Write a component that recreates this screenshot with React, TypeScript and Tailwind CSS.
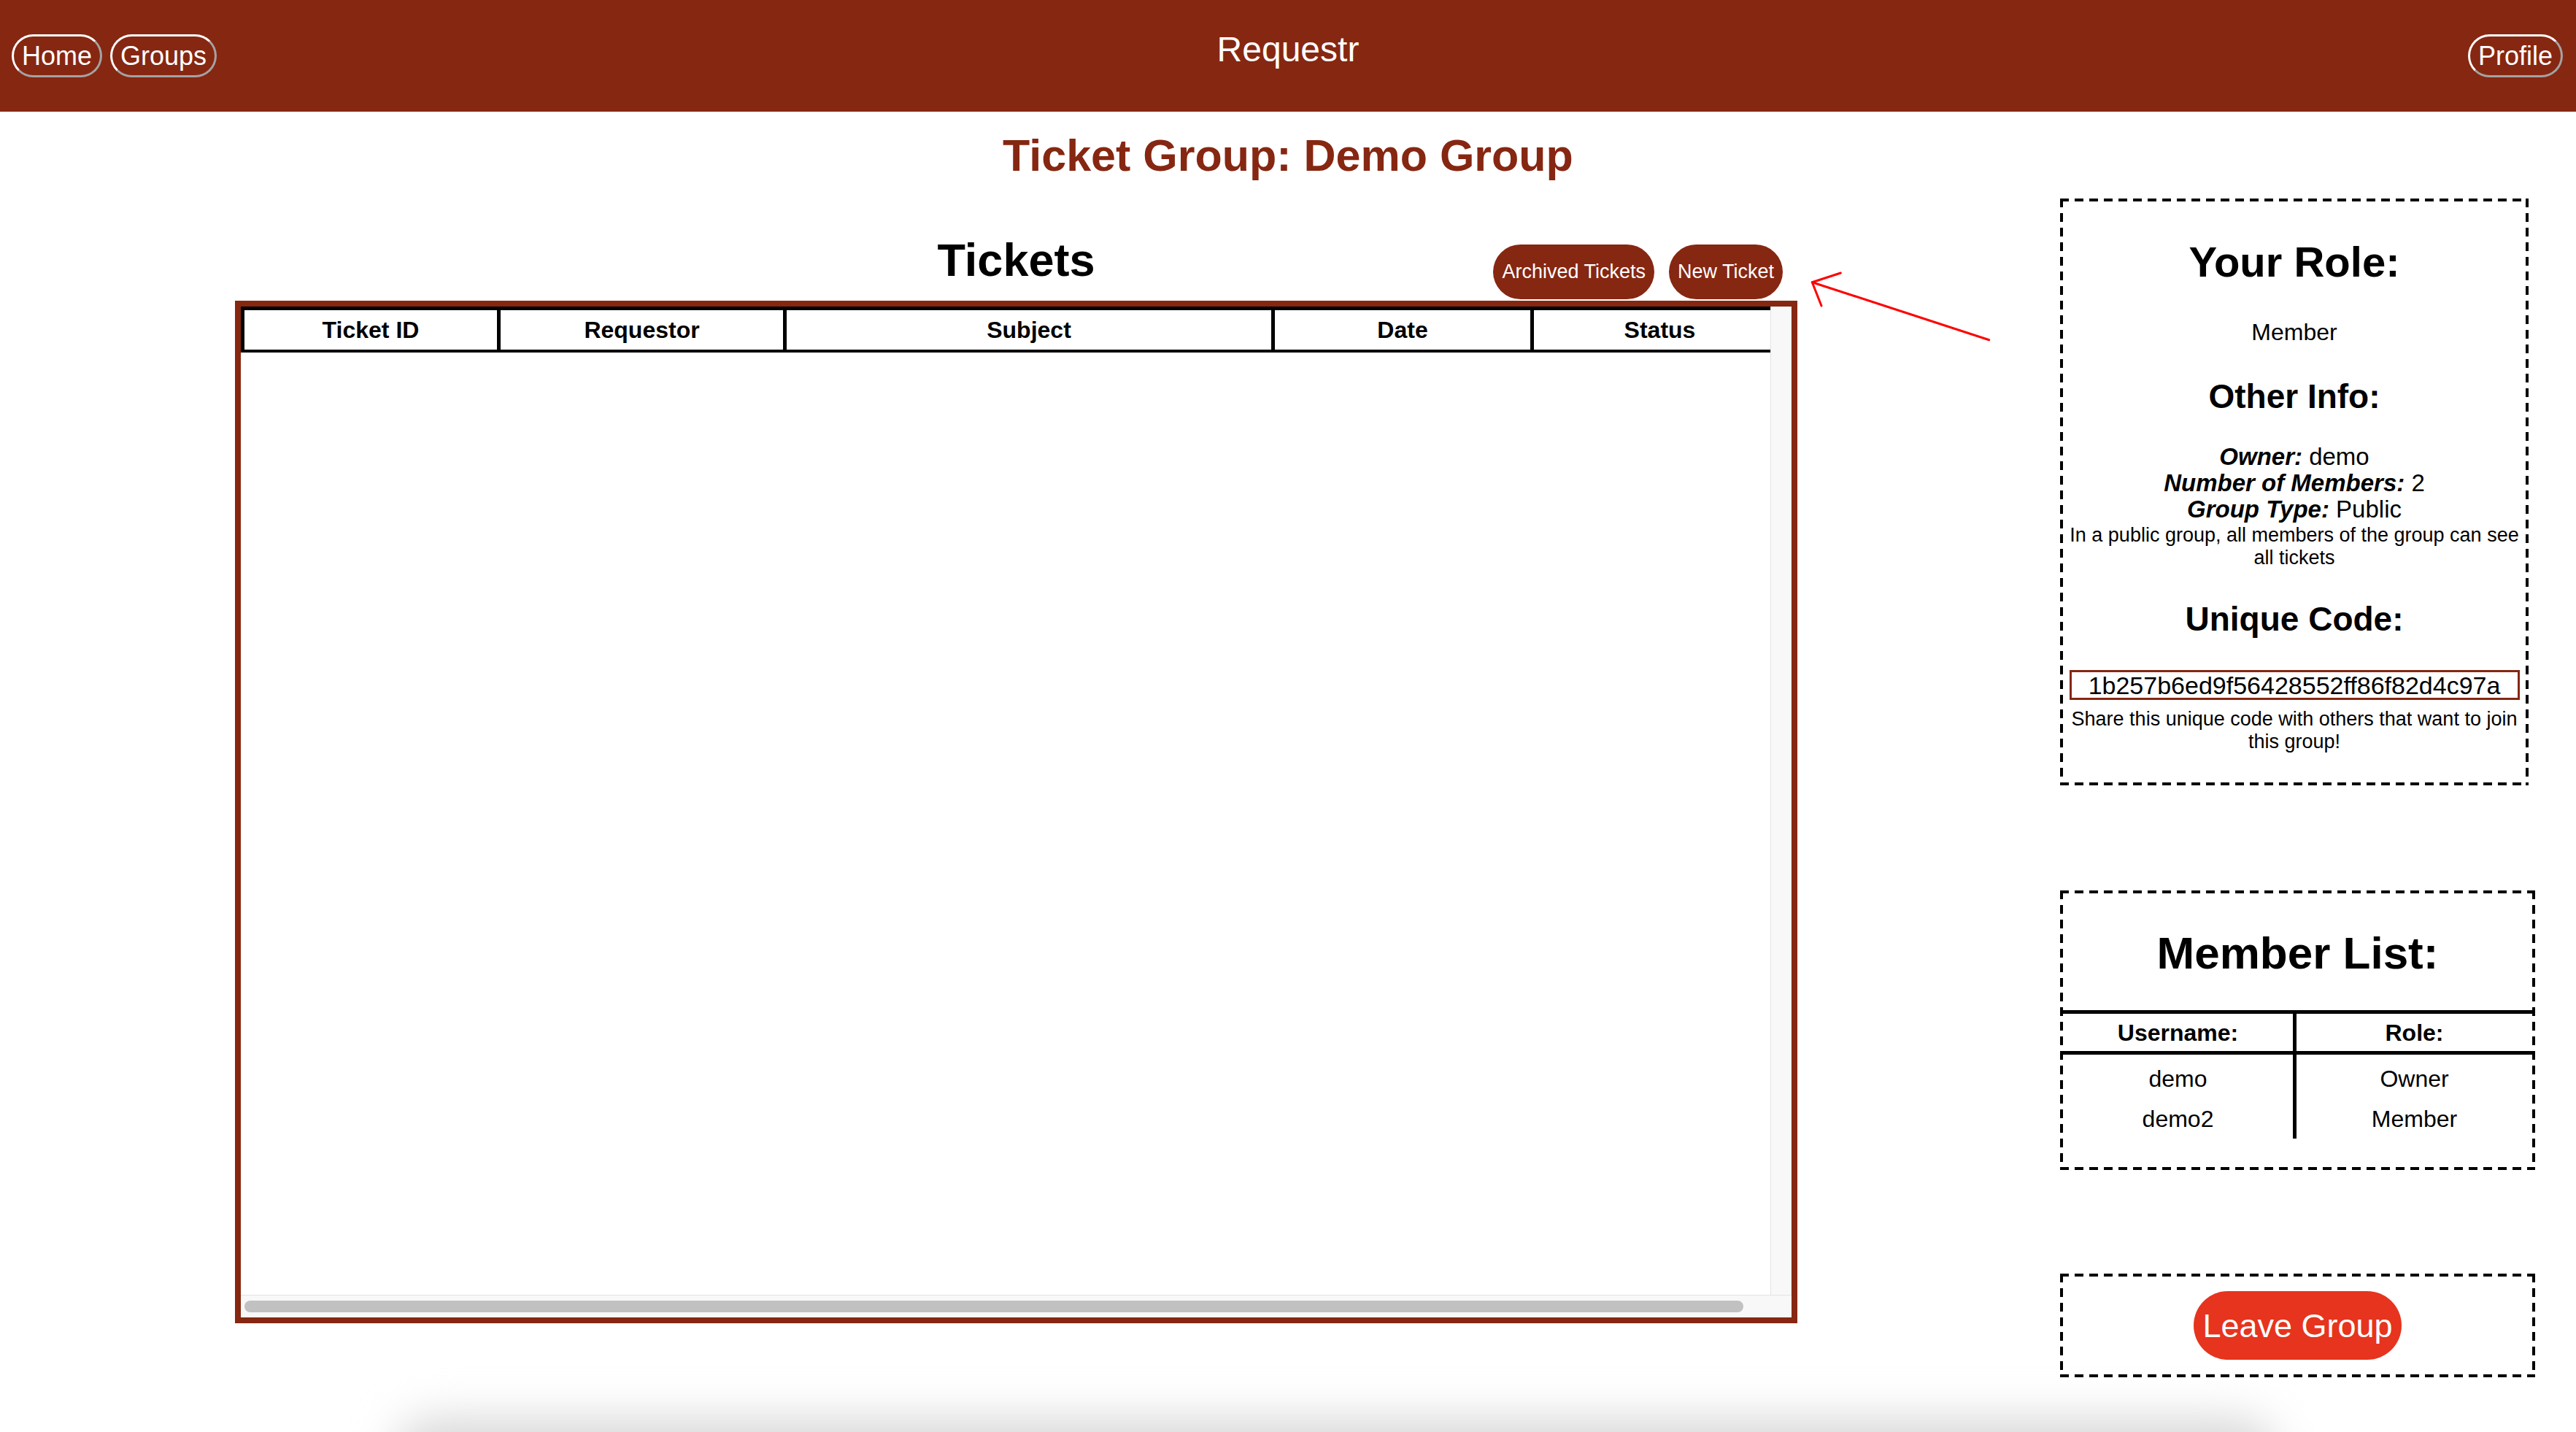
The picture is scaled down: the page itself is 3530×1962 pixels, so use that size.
import React from "react";

const DASHED =
  "[background:repeating-linear-gradient(90deg,#000_0_12px,transparent_12px_20px)_top_left/100%_4px_no-repeat,repeating-linear-gradient(90deg,#000_0_12px,transparent_12px_20px)_bottom_left/100%_4px_no-repeat,repeating-linear-gradient(180deg,#000_0_12px,transparent_12px_20px)_top_left/4px_100%_no-repeat,repeating-linear-gradient(180deg,#000_0_12px,transparent_12px_20px)_top_right/4px_100%_no-repeat]";

function NavButton({ children }: { children: React.ReactNode }) {
  return (
    <button className="h-[59px] rounded-full border-[3px] border-t-white border-l-white border-r-[#a3a3a3] border-b-[#a3a3a3] bg-transparent px-[11px] text-[36px] leading-none text-white">
      {children}
    </button>
  );
}

function PillButton({ children }: { children: React.ReactNode }) {
  return (
    <button className="h-[75px] rounded-full bg-[#862712] px-[12px] text-[27px] leading-none text-white">
      {children}
    </button>
  );
}

export default function App() {
  const cols = [
    { label: "Ticket ID", w: "w-[351px] border-r-[5px]" },
    { label: "Requestor", w: "w-[392px] border-r-[5px]" },
    { label: "Subject", w: "w-[669px] border-r-[5px]" },
    { label: "Date", w: "w-[355px] border-r-[5px]" },
    { label: "Status", w: "w-[350px] border-r-[5px]" },
  ];
  return (
    <div className="relative h-[1962px] w-[3530px] overflow-hidden bg-white font-['Liberation_Sans',Arial,sans-serif] text-black">
      <header className="grid h-[153px] grid-cols-[1fr_auto_1fr] bg-[#862712] px-[16px]">
        <div className="flex items-center gap-[11px]">
          <NavButton>Home</NavButton>
          <NavButton>Groups</NavButton>
        </div>
        <div className="pt-[40px] text-[48px] leading-[55px] text-white">Requestr</div>
        <div className="flex items-center justify-end pr-[2px]">
          <NavButton>Profile</NavButton>
        </div>
      </header>

      <h1 className="mt-[25px] text-center text-[61px] font-bold leading-[71px] text-[#862712]">
        Ticket Group: Demo Group
      </h1>

      <div className="mt-[23px] flex pl-[322px]">
        {/* Left column */}
        <div className="flex w-[2141px] flex-col">
          <div className="grid h-[140px] grid-cols-[1fr_auto_1fr]">
            <div />
            <h2 className="mt-[48px] text-[63px] font-bold leading-[72px]">Tickets</h2>
            <div className="flex items-end justify-end gap-[20px] pb-[2px] pr-[20px]">
              <PillButton>Archived Tickets</PillButton>
              <PillButton>New Ticket</PillButton>
            </div>
          </div>
          <div className="flex h-[1401px] flex-col border-[8px] border-[#862712]">
            <div className="flex min-h-0 flex-1">
              <div className="min-w-0 flex-1 overflow-hidden bg-white">
                <div className="flex h-[63px] w-max border-t-[5px] border-b-[4px] border-l-[5px] border-black">
                  {cols.map((c) => (
                    <div
                      key={c.label}
                      className={`flex flex-none items-center justify-center border-black text-[32px] font-bold leading-none ${c.w}`}
                    >
                      {c.label}
                    </div>
                  ))}
                </div>
              </div>
              <div className="w-[29px] border-l border-r border-l-[#e3e3e3] border-r-[#ececec] bg-[#f8f8f8]" />
            </div>
            <div className="flex h-[31px] items-center border-t border-[#e3e3e3] bg-[#f8f8f8] px-[5px]">
              <div className="h-[16px] w-[2054px] rounded-full bg-[#c1c1c1]" />
            </div>
          </div>
        </div>

        {/* Right column */}
        <div className="ml-[360px] flex w-[651px] flex-col">
          <div
            className={`flex w-[642px] flex-col items-center px-[4px] pb-[44px] pt-[53px] text-center ${DASHED}`}
          >
            <h2 className="text-[58px] font-bold leading-[67px]">Your Role:</h2>
            <p className="mt-[45px] text-[32px] leading-[37px]">Member</p>
            <h2 className="mt-[43px] text-[46px] font-bold leading-[53px]">Other Info:</h2>
            <div className="mt-[38px] text-[33px] leading-[36px]">
              <div>
                <b><i>Owner:</i></b> demo
              </div>
              <div>
                <b><i>Number of Members:</i></b> 2
              </div>
              <div>
                <b><i>Group Type:</i></b> Public
              </div>
            </div>
            <p className="mt-[2px] text-[27px] leading-[31px]">
              In a public group, all members of the group can see all tickets
            </p>
            <h2 className="mt-[42px] text-[46px] font-bold leading-[53px]">Unique Code:</h2>
            <div className="mt-[43px] flex h-[41px] w-[617px] items-center justify-center border-[3px] border-[#862712] text-[34px] leading-none">
              1b257b6ed9f56428552ff86f82d4c97a
            </div>
            <p className="mt-[11px] text-[27px] leading-[31px]">
              Share this unique code with others that want to join this group!
            </p>
          </div>

          <div className={`mt-[144px] flex h-[383px] flex-col px-[4px] pt-[4px] ${DASHED}`}>
            <h2 className="mt-[46px] text-center text-[62px] font-bold leading-[71px]">Member List:</h2>
            <div className="-mx-[4px] mt-[43px] border-t-[5px] border-black">
              <div className="mx-[4px]">
                <div className="grid grid-cols-[320px_1fr]">
                  <div className="flex h-[56px] items-center justify-center border-b-[5px] border-r-[5px] border-black text-[32px] font-bold">
                    Username:
                  </div>
                  <div className="flex h-[56px] items-center justify-center border-b-[5px] border-black text-[32px] font-bold">
                    Role:
                  </div>
                </div>
                <div className="grid grid-cols-[320px_1fr] text-[32px]">
                  <div className="border-r-[5px] border-black pt-[5px]">
                    <div className="flex h-[56px] items-center justify-center">demo</div>
                    <div className="flex h-[54px] items-center justify-center">demo2</div>
                  </div>
                  <div className="pt-[5px]">
                    <div className="flex h-[56px] items-center justify-center">Owner</div>
                    <div className="flex h-[54px] items-center justify-center">Member</div>
                  </div>
                </div>
              </div>
            </div>
          </div>

          <div className={`mt-[142px] flex h-[142px] items-center justify-center ${DASHED}`}>
            <button className="h-[94px] w-[285px] rounded-full bg-[#e6341e] text-[45px] leading-none text-white">
              Leave Group
            </button>
          </div>
        </div>
      </div>

      {/* annotation arrow */}
      <svg
        className="pointer-events-none absolute left-[2470px] top-[360px]"
        width="270"
        height="120"
        viewBox="0 0 270 120"
      >
        <line x1="255.7" y1="105.7" x2="13.3" y2="26.7" stroke="#ff0000" strokeWidth="3" strokeLinecap="round" />
        <polyline
          points="52.3,14 13.3,26.7 26,59"
          fill="none"
          stroke="#ff0000"
          strokeWidth="3"
          strokeLinecap="round"
          strokeLinejoin="round"
        />
      </svg>

      {/* faint shadow at the page bottom */}
      <div className="pointer-events-none absolute left-[540px] top-[1945px] h-[110px] w-[2580px] rounded-[60px] bg-[#d6d6d6] blur-[30px]" />
    </div>
  );
}
